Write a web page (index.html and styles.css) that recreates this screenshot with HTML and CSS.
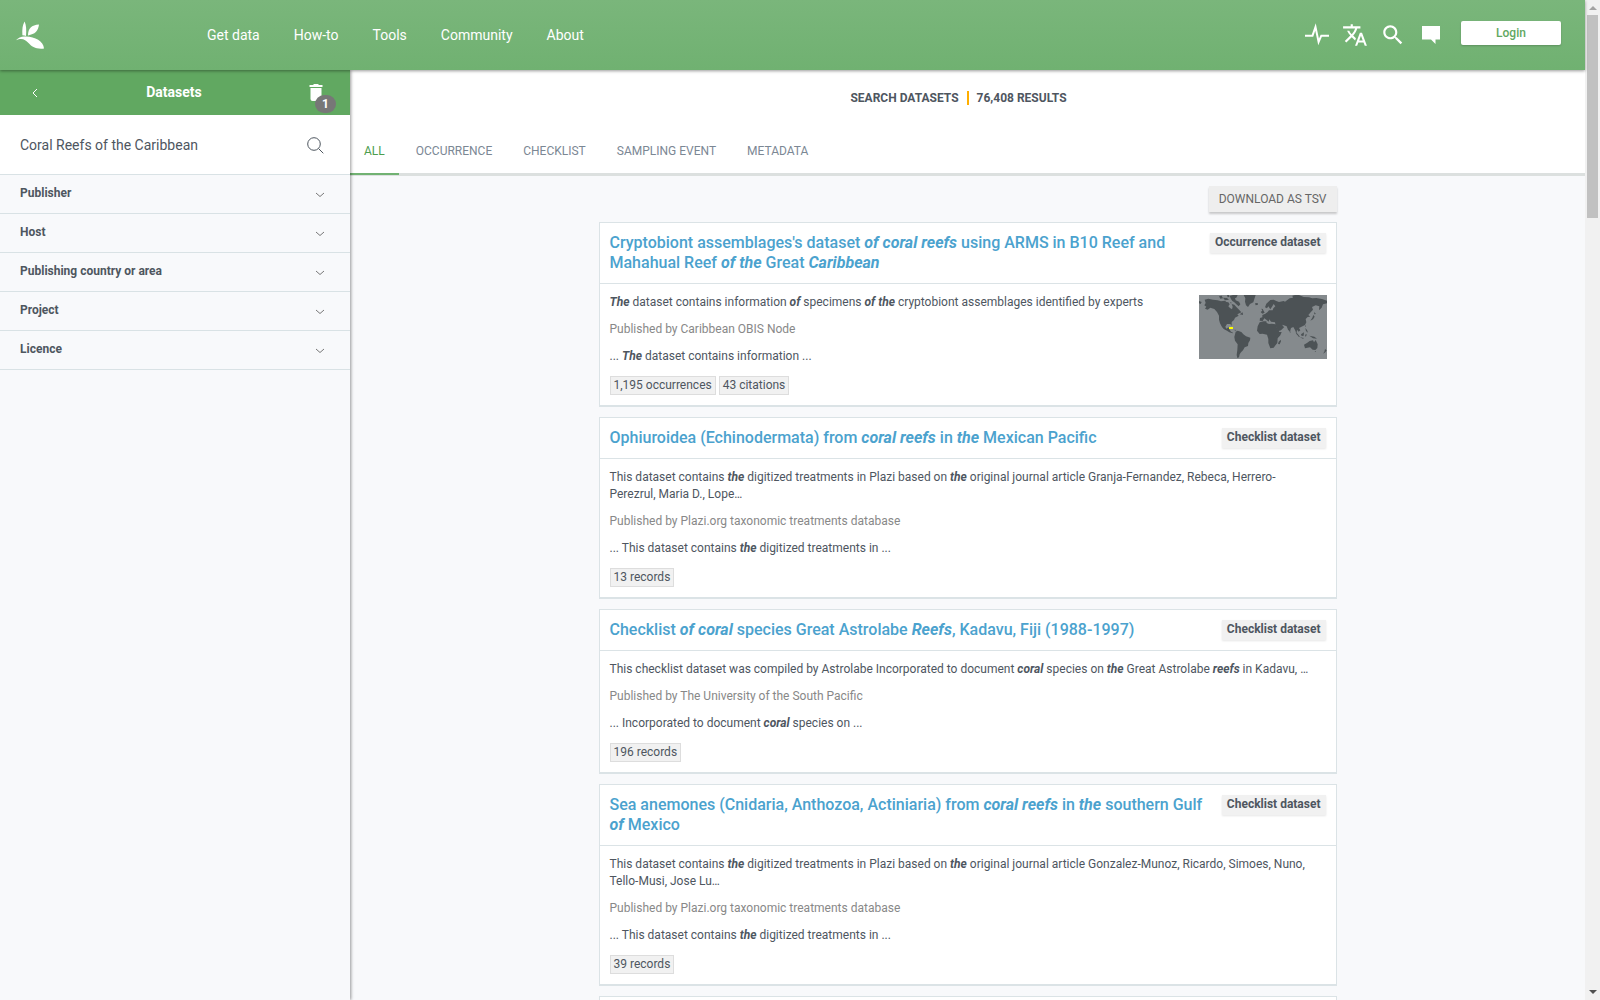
FILE: index.html
```html
<!doctype html>
<html lang="en">
<head>
    <meta charset="UTF-8">
    <meta name="viewport" content="width=device-width, initial-scale=1.0">
    <title>Search datasets</title>
    <link rel="stylesheet" href="styles.css">
</head>
<body>
    <div class="page">
        <header class="site-header">
            <a class="logo" href="#" aria-label="Home">
                <svg width="28" height="28" viewBox="0 0 28 28" fill="#fff">
                    <path d="M8.6 0.5C6.6 4 6 8 6.4 14.3C8 14.5 9.2 14.8 10 15C10.5 9 10.3 4 8.6 0.5Z"/>
                    <path d="M23 3.6C15.5 4 12 7.5 12 14.4C19 13.4 22.2 10 23 3.6Z"/>
                    <path d="M0 19.2C2.500 16.500 6 15 10 15.600C19 16 27.500 20 28 27.500C20.500 28.600 15.500 25.500 12.500 22C9.500 18.800 6 16.500 0 19.200Z"/>
                </svg>
            </a>
            <nav class="main-nav">
                <a href="#">Get data</a>
                <a href="#">How-to</a>
                <a href="#">Tools</a>
                <a href="#">Community</a>
                <a href="#">About</a>
            </nav>
            <div class="tools">
                <button class="icon-btn" aria-label="Health">
                    <svg width="26" height="26" viewBox="0 0 26 26" fill="none" stroke="#fff" stroke-width="2"><path d="M1 13.700H8.500L11.500 5L14.600 20L17.300 13.700H25"/></svg>
                </button>
                <button class="icon-btn" aria-label="Language">
                    <svg width="26" height="26" viewBox="0 0 24 24" fill="#fff"><path d="M12.87 15.07l-2.54-2.51.03-.03c1.74-1.94 2.98-4.17 3.71-6.53H17V4h-7V2H8v2H1v1.99h11.17C11.5 7.92 10.44 9.75 9 11.35 8.07 10.32 7.3 9.19 6.69 8h-2c.73 1.63 1.73 3.17 2.98 4.56l-5.09 5.02L4 19l5-5 3.11 3.11.76-2.04zM18.5 10h-2L12 22h2l1.12-3h4.75L21 22h2l-4.5-12zm-2.62 7l1.62-4.33L19.12 17h-3.24z"/></svg>
                </button>
                <button class="icon-btn" aria-label="Search">
                    <svg width="26" height="26" viewBox="0 0 24 24" fill="#fff"><path d="M15.5 14h-.79l-.28-.27C15.41 12.59 16 11.11 16 9.5 16 5.91 13.09 3 9.5 3S3 5.91 3 9.5 5.91 16 9.5 16c1.61 0 3.09-.59 4.23-1.57l.27.28v.79l5 4.99L20.49 19l-4.99-5zm-6 0C7.01 14 5 11.99 5 9.5S7.01 5 9.5 5 14 7.01 14 9.5 11.99 14 9.5 14z"/></svg>
                </button>
                <button class="icon-btn" aria-label="Feedback">
                    <svg width="26" height="26" viewBox="0 0 26 26" fill="#fff"><path d="M4 4H22V17.500H17.500V22L13 17.500H4Z"/></svg>
                </button>
                <button class="btn-login">Login</button>
            </div>
        </header>

        <div class="columns">
            <aside class="sidebar">
                <div class="sidebar-title">
                    <button class="icon-btn" aria-label="Back">
                        <svg width="8" height="10" viewBox="0 0 8 10" fill="none" stroke="#fff"><path d="M6 1L2 5L6 9"/></svg>
                    </button>
                    <h2>Datasets</h2>
                    <button class="icon-btn clear" aria-label="Clear filters">
                        <svg width="14" height="18" viewBox="0 0 14 18" fill="#fff"><path d="M0.500 1H4L5 0H9L10 1H13.500V3H0.500ZM1.500 4H12.500V15Q12.500 17 10.500 17H3.500Q1.500 17 1.500 15Z"/></svg>
                        <span class="count">1</span>
                    </button>
                </div>
                <form class="search">
                    <input type="text" aria-label="Search datasets" value="Coral Reefs of the Caribbean">
                    <button type="button" class="icon-btn" aria-label="Search">
                        <svg width="17" height="17" viewBox="0 0 17 17" fill="none" stroke="#4e565f"><circle cx="7" cy="7" r="6.300"/><path d="M11.500 11.500L16.300 16.300"/></svg>
                    </button>
                </form>
                <ul class="filters">
                    <li><button>Publisher<svg width="10" height="6" viewBox="0 0 10 6"><path d="M1 1L5 4.500L9 1"/></svg></button></li>
                    <li><button>Host<svg width="10" height="6" viewBox="0 0 10 6"><path d="M1 1L5 4.500L9 1"/></svg></button></li>
                    <li><button>Publishing country or area<svg width="10" height="6" viewBox="0 0 10 6"><path d="M1 1L5 4.500L9 1"/></svg></button></li>
                    <li><button>Project<svg width="10" height="6" viewBox="0 0 10 6"><path d="M1 1L5 4.500L9 1"/></svg></button></li>
                    <li><button>Licence<svg width="10" height="6" viewBox="0 0 10 6"><path d="M1 1L5 4.500L9 1"/></svg></button></li>
                </ul>
            </aside>

            <main class="content">
                <div class="content-head">
                    <h1><span>Search datasets</span><span class="total">76,408 results</span></h1>
                    <nav class="tabs">
                        <a class="active" href="#">All</a>
                        <a href="#">Occurrence</a>
                        <a href="#">Checklist</a>
                        <a href="#">Sampling event</a>
                        <a href="#">Metadata</a>
                    </nav>
                </div>

                <div class="results">
                    <button class="btn-download">Download as TSV</button>

                    <article class="card">
                        <div class="card-head">
                            <h3><a href="#">Cryptobiont assemblages's dataset <em>of</em> <em>coral</em> <em>reefs</em> using ARMS in B10 Reef and Mahahual Reef <em>of</em> <em>the</em> Great <em>Caribbean</em></a></h3>
                            <span class="type">Occurrence dataset</span>
                        </div>
                        <div class="card-body">
                            <div class="info">
                                <p><em>The</em> dataset contains information <em>of</em> specimens <em>of</em> <em>the</em> cryptobiont assemblages identified by experts</p>
                                <p class="publisher">Published by Caribbean OBIS Node</p>
                                <p>... <em>The</em> dataset contains information ...</p>
                                <div class="tags"><a href="#">1,195 occurrences</a><a href="#">43 citations</a></div>
                            </div>
                            <svg class="map" width="128" height="64" viewBox="0 0 384 192">
                                <rect width="384" height="192" fill="#858a8d"/>
                                <g fill="#4c5255">
                                    <!-- Americas -->
                                    <path d="M0 18L8 21L5 27L0 25ZM17 14L28 11L42 14L56 16L66 19L78 17L82 21L88 22L92 28L88 34L93 39L99 43L101 35L98 27L106 29L112 36L118 42L127 52L121 55L115 58L119 62L108 68L105 75L98 81L98 93L94 87L84 87L79 95L82 101L89 97L91 103L96 110L102 113L101 115L91 112L84 107L74 102L69 96L63 85L60 74L60 62L54 51L46 42L34 38L26 44L18 41L22 35L16 31L20 24Z"/>
                                    <path d="M60 4L68 2L72 10L64 11ZM72 8L84 9L90 14L78 16ZM84 0L90 0L91 6L86 7ZM92 3L102 0H116L112 8L108 10L110 16L120 20L124 28L119 34L112 28L106 22L100 18L96 12ZM93 21L98 23L96 26ZM122 58L131 52L132 60Z"/>
                                    <path d="M92 98L101 101L105 103L97 101ZM106 104L113 105L108 107Z"/>
                                    <path d="M110 110L116 107L127 111L133 118L141 124L154 128L153 136L148 144L147 153L137 157L132 166L126 172L122 178L120 187L115 189L113 180L115 165L116 148L108 137L106 126Z"/>
                                    <!-- Greenland and Iceland -->
                                    <path d="M134 0H170L166 12L163 22L153 27L147 36L141 31L138 20L139 10ZM168 25L176 24L177 29L170 31Z"/>
                                    <!-- Africa -->
                                    <path d="M182 82L194 79L202 79L203 84L210 87L218 86L230 88L234 99L241 111L248 111L244 121L236 130L235 144L230 150L224 158L214 160L208 144L208 132L204 119L191 116L182 117L174 107L176 94ZM245 134L246 139L242 148L237 147L239 140Z"/>
                                    <!-- Europe and Asia -->
                                    <path d="M190 56L185 51L190 47L187 41L191 42L197 53ZM198 37L202 26L214 15L224 14L232 18L240 21L254 18L258 20L272 10L282 8L280 2L288 0H300L314 6L330 7L340 10L352 9L369 12L384 17V25L372 28L368 38L360 46L361 34L350 31L339 36L342 44L335 52L328 60L334 65L326 66L320 72L322 82L318 90L306 96L300 99L304 106L299 110L294 104L293 113L298 121L294 119L288 105L283 96L276 99L273 110L267 104L263 94L250 89L252 94L256 96L246 106L237 109L230 92L228 82L216 80L211 73L209 80L203 75L196 70L191 78L182 77L183 69L190 67L190 60L199 56L206 51L210 46L221 46L223 40L229 34L224 27L219 35L214 43L208 34L204 40Z"/>
                                    <path d="M343 60L347 65L342 73L334 77L340 68ZM345 51L351 57L346 58ZM319 90L321 94L318 95ZM272 108L275 111L273 114ZM289 112L297 118L303 126L299 125ZM306 118L315 112L314 122L308 123ZM302 127L315 129L312 131ZM318 119L324 118L320 126ZM319 99L324 105L327 113L321 108ZM331 122L346 125L354 131L342 130Z"/>
                                    <!-- Oceania -->
                                    <path d="M315 149L325 143L332 138L342 136L345 142L350 135L356 148L355 159L349 165L341 164L333 157L318 160ZM347 168L351 168L349 171ZM378 162L383 166L379 172L372 176L376 170Z"/>
                                </g>
                                <rect x="90" y="96" width="12" height="6" fill="#ff0"/>
                            </svg>
                        </div>
                    </article>

                    <article class="card">
                        <div class="card-head">
                            <h3><a href="#">Ophiuroidea (Echinodermata) from <em>coral</em> <em>reefs</em> in <em>the</em> Mexican Pacific</a></h3>
                            <span class="type">Checklist dataset</span>
                        </div>
                        <div class="card-body">
                            <div class="info">
                                <p>This dataset contains <em>the</em> digitized treatments in Plazi based on <em>the</em> original journal article Granja-Fernandez, Rebeca, Herrero-Perezrul, Maria D., Lope…</p>
                                <p class="publisher">Published by Plazi.org taxonomic treatments database</p>
                                <p>... This dataset contains <em>the</em> digitized treatments in ...</p>
                                <div class="tags"><a href="#">13 records</a></div>
                            </div>
                        </div>
                    </article>

                    <article class="card">
                        <div class="card-head">
                            <h3><a href="#">Checklist <em>of</em> <em>coral</em> species Great Astrolabe <em>Reefs</em>, Kadavu, Fiji (1988-1997)</a></h3>
                            <span class="type">Checklist dataset</span>
                        </div>
                        <div class="card-body">
                            <div class="info">
                                <p>This checklist dataset was compiled by Astrolabe Incorporated to document <em>coral</em> species on <em>the</em> Great Astrolabe <em>reefs</em> in Kadavu, …</p>
                                <p class="publisher">Published by The University of the South Pacific</p>
                                <p>... Incorporated to document <em>coral</em> species on ...</p>
                                <div class="tags"><a href="#">196 records</a></div>
                            </div>
                        </div>
                    </article>

                    <article class="card">
                        <div class="card-head">
                            <h3><a href="#">Sea anemones (Cnidaria, Anthozoa, Actiniaria) from <em>coral</em> <em>reefs</em> in <em>the</em> southern Gulf <em>of</em> Mexico</a></h3>
                            <span class="type">Checklist dataset</span>
                        </div>
                        <div class="card-body">
                            <div class="info">
                                <p>This dataset contains <em>the</em> digitized treatments in Plazi based on <em>the</em> original journal article Gonzalez-Munoz, Ricardo, Simoes, Nuno, Tello-Musi, Jose Lu…</p>
                                <p class="publisher">Published by Plazi.org taxonomic treatments database</p>
                                <p>... This dataset contains <em>the</em> digitized treatments in ...</p>
                                <div class="tags"><a href="#">39 records</a></div>
                            </div>
                        </div>
                    </article>

                    <article class="card">
                        <div class="card-head"></div>
                    </article>
                </div>
            </main>
        </div>
    </div>

    <div class="scrollbar" aria-hidden="true">
        <span class="arrow up"></span>
        <span class="thumb"></span>
        <span class="arrow down"></span>
    </div>
</body>
</html>
```
FILE: styles.css
```css
* {
    box-sizing: border-box;
}

body {
    margin: 0;
    height: 100vh;
    display: flex;
    overflow: hidden;
    font-family: Roboto, "Liberation Sans", sans-serif;
    font-size: 12px;
    line-height: 17px;
    color: #4e565f;
    background: #f8f9fb;
}

h1, h2, h3, p, ul {
    margin: 0;
    padding: 0;
}

a {
    color: inherit;
    text-decoration: none;
}

button {
    font: inherit;
    color: inherit;
    border: none;
    background: none;
    padding: 0;
    cursor: pointer;
}

svg {
    display: block;
}

.page {
    flex: 1;
    min-width: 0;
    display: flex;
    flex-direction: column;
}

/* Header */
.site-header {
    position: relative;
    z-index: 2;
    flex: none;
    height: 70px;
    display: flex;
    align-items: center;
    padding: 0 24px 0 16px;
    background: linear-gradient(#7ab67b, #70b171);
    box-shadow: 0 1px 3px rgba(0, 0, 0, 0.4);
}

.logo {
    width: 191px;
}

.main-nav {
    display: flex;
    gap: 34px;
    font-size: 14px;
    color: #fff;
}

.tools {
    margin-left: auto;
    display: flex;
    align-items: center;
    gap: 12px;
}

.btn-login {
    width: 100px;
    height: 24px;
    margin: 0 0 4px 5px;
    border-radius: 2px;
    background: #fff;
    color: #61a861;
    font-weight: 500;
    box-shadow: 0 1px 2px rgba(0, 0, 0, 0.2);
}

.columns {
    flex: 1;
    min-height: 0;
    display: flex;
}

/* Sidebar */
.sidebar {
    position: relative;
    z-index: 1;
    flex: none;
    width: 350px;
    box-shadow: 1px 0 3px rgba(0, 0, 0, 0.4);
    background: #f8f9fb;
}

.sidebar-title {
    height: 45px;
    display: flex;
    align-items: center;
    justify-content: space-between;
    padding: 0 27px 0 31px;
    background: #61a861;
    color: #fff;
}

.sidebar-title h2 {
    font-size: 14px;
    font-weight: 700;
}

.clear {
    position: relative;
}

.count {
    position: absolute;
    left: 6px;
    top: 11px;
    width: 21px;
    height: 18px;
    border-radius: 9px;
    background: #777;
    line-height: 18px;
    font-weight: 700;
}

.search {
    height: 60px;
    display: flex;
    align-items: center;
    padding: 1px 26px 0 20px;
    background: #fff;
    border-bottom: 1px solid #d9e2e5;
}

.search input {
    flex: 1;
    min-width: 0;
    padding: 0;
    border: none;
    outline: none;
    background: none;
    font: inherit;
    font-size: 14px;
    color: inherit;
}

.filters {
    list-style: none;
}

.filters button {
    width: 100%;
    height: 39px;
    display: flex;
    align-items: center;
    justify-content: space-between;
    padding: 0 25px 1px 20px;
    border-bottom: 1px solid #d9e2e5;
    font-weight: 700;
}

.filters svg {
    margin-top: 3px;
    fill: none;
    stroke: #777;
}

/* Content */
.content {
    flex: 1;
    min-width: 0;
}

.content-head {
    background: #fff;
    border-bottom: 3px solid #dce0df;
}

.content-head h1 {
    display: flex;
    justify-content: center;
    padding: 21px 18px 0 0;
    font-size: 12px;
    font-weight: 700;
    line-height: 14px;
    text-transform: uppercase;
}

.total {
    margin-left: 8px;
    padding-left: 8px;
    border-left: 2px solid #ffae00;
}

.tabs {
    display: flex;
    gap: 3px;
    margin-top: 24px;
    text-transform: uppercase;
    color: #7b8794;
}

.tabs a {
    padding: 14px 14px 13px;
    margin-bottom: -2px;
    border-bottom: 2px solid transparent;
}

.tabs .active {
    color: #4c9d4e;
    border-color: #71b272;
}

.results {
    max-width: 758px;
    margin: 0 auto;
    padding: 10px;
    display: flex;
    flex-direction: column;
    gap: 10px;
}

.btn-download {
    align-self: flex-end;
    height: 26px;
    padding: 0 10px;
    background: #eee;
    color: #666;
    text-transform: uppercase;
    box-shadow: 0 2px 2px rgba(0, 0, 0, 0.2);
}

.card {
    background: #fff;
    border: 1px solid #dbe3e6;
    border-bottom-width: 2px;
}

.card-head {
    display: flex;
    align-items: flex-start;
    justify-content: space-between;
    gap: 10px;
    padding: 10px;
    border-bottom: 1px solid #dbe3e6;
}

.card-head h3 {
    font-size: 16px;
    font-weight: 500;
    line-height: 20px;
    color: #4ba2ce;
}

.card em {
    font-weight: 700;
}

.type {
    flex: none;
    padding: 1px 5px 2px;
    background: #f1f1f1;
    font-weight: 700;
    box-shadow: 0 1px 2px rgba(0, 0, 0, 0.1);
}

.card-body {
    display: flex;
    padding: 10px 9px 10px 10px;
}

.info {
    flex: 1;
    padding-right: 12px;
}

.info p {
    margin-bottom: 10px;
}

.publisher {
    color: #888;
}

.tags {
    display: flex;
    gap: 3px;
    margin-top: 11px;
}

.tags a {
    padding: 0 3px;
    border: 1px solid #ddd;
    background: #f1f1f1;
}

.map {
    flex: none;
    margin-top: 1px;
}

/* Scrollbar */
.scrollbar {
    flex: none;
    width: 15px;
    display: flex;
    flex-direction: column;
    align-items: center;
    background: #f1f1f1;
}

.thumb {
    width: 11px;
    height: 203px;
    background: #c1c1c1;
}

.arrow {
    border: 4px solid transparent;
}

.up {
    margin: 2px 0 5px;
    border-bottom-color: #a3a3a3;
}

.down {
    margin: auto 0 2px;
    border-top-color: #505050;
}
```
